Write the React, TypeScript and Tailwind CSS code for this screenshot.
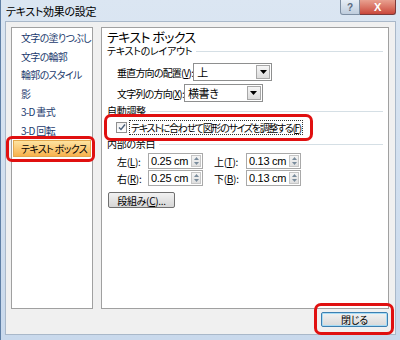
import React from 'react'

const menuItems = ['文字の塗りつぶし', '文字の輪郭', '輪郭のスタイル', '影', '3-D 書式', '3-D 回転', 'テキスト ボックス']

function Combo({ value, width }: { value: string; width: string }) {
  return (
    <div className={`flex h-[18px] items-stretch border border-[#8e8f8f] bg-white ${width}`}>
      <div className="flex flex-1 items-center whitespace-nowrap pl-[3px] text-[11px]">{value}</div>
      <div className="m-[1px] flex w-[14px] items-center justify-center border border-[#a7a7a7] bg-gradient-to-b from-[#f6f6f6] to-[#dcdcdc]">
        <svg width="7" height="4" viewBox="0 0 7 4">
          <path d="M0 0h7L3.5 4z" fill="#000" />
        </svg>
      </div>
    </div>
  )
}

function Spin({ value }: { value: string }) {
  return (
    <div className="flex h-[16px] w-[55px] shrink-0 items-stretch border border-[#a9a9a9] bg-white">
      <div className="flex flex-1 items-center whitespace-nowrap pl-[2px] font-['Liberation_Sans'] text-[11px] tracking-[-0.3px]">
        {value}
      </div>
      <div className="my-[1px] mr-[1px] flex w-[10px] flex-col border border-[#c6c6c6] bg-gradient-to-b from-[#f4f4f4] to-[#e0e0e0]">
        <div className="flex flex-1 items-center justify-center">
          <svg width="5" height="3" viewBox="0 0 5 3">
            <path d="M0 3h5L2.5 0z" fill="#7a8c9c" />
          </svg>
        </div>
        <div className="flex flex-1 items-center justify-center">
          <svg width="5" height="3" viewBox="0 0 5 3">
            <path d="M0 0h5L2.5 3z" fill="#7a8c9c" />
          </svg>
        </div>
      </div>
    </div>
  )
}

function Section({ title }: { title: string }) {
  return (
    <div className="flex items-center gap-[4px] pr-[5px]">
      <span className="whitespace-nowrap text-[10px] leading-[12px]">{title}</span>
      <div className="h-0 flex-1 border-t border-[#d5dfe5]" />
    </div>
  )
}

export default function App() {
  return (
    <div className="relative flex h-[340px] w-[400px] flex-col overflow-hidden border-l-[1px] border-[#5f7fa5] bg-gradient-to-b from-[#dbe6f2] to-[#c9d9ec] font-['Noto_Sans_CJK_JP',sans-serif] text-black [font-feature-settings:'palt'] tracking-[-0.3px]">
      {/* Title bar */}
      <div className="flex h-[21px] items-start">
        <div className="whitespace-nowrap pl-[5px] pt-[3px] text-[11px] leading-[16px]">テキスト効果の設定</div>
        <div className="ml-auto mr-[4px] flex">
          <div className="flex h-[15px] w-[20px] items-center justify-center rounded-bl-[3px] border border-t-0 border-[#7d8ea2] bg-gradient-to-b from-[#e6edf5] to-[#bfcddd] font-['Liberation_Sans'] text-[10px] font-bold text-[#5a6a7e]">
            ?
          </div>
          <div className="flex h-[15px] w-[36px] items-center justify-center rounded-br-[3px] border border-l-0 border-t-0 border-[#7a3a3a] bg-gradient-to-b from-[#e8a090] to-[#c9463b] font-['Liberation_Sans'] text-[11px] font-bold text-white">
            X
          </div>
        </div>
      </div>

      {/* Client area */}
      <div className="mx-[4px] mb-[5px] flex flex-1 flex-col border border-[#a9b8c9] bg-[#f0f0f0]">
        <div className="flex flex-1 gap-[8px] pl-[5px] pr-[6px] pt-[5px]">
          {/* Left list */}
          <div className="flex w-[82px] shrink-0 flex-col border border-[#a0a0a0] bg-white pt-[1px]">
            {menuItems.map((item, i) =>
              i === menuItems.length - 1 ? (
                <div
                  key={item}
                  className="mx-[1px] flex h-[17px] items-center whitespace-nowrap border border-[#e3a84e] bg-gradient-to-b from-[#fde3a0] to-[#f7b24c] pl-[7px] text-[10px] leading-none tracking-[-0.7px]"
                >
                  {item}
                </div>
              ) : (
                <div
                  key={item}
                  className="flex h-[18.5px] items-center whitespace-nowrap pl-[9px] text-[10px] leading-none tracking-[-0.7px] text-[#1c3b6e]"
                >
                  {item}
                </div>
              ),
            )}
          </div>

          {/* Right panel */}
          <div className="flex flex-1 flex-col border border-[#a0a0a0] bg-white pl-[5px] pt-[2px]">
            <div className="whitespace-nowrap text-[13px] leading-[14px] tracking-[-0.6px]">テキスト ボックス</div>
            <div className="mt-[1px]">
              <Section title="テキストのレイアウト" />
            </div>
            <div className="mt-[6px] flex flex-col gap-[3px] pl-[10px]">
              <div className="flex items-center">
                <span className="whitespace-nowrap text-[10px] tracking-[-0.8px]">
                  垂直方向の配置(<u>V</u>):
                </span>
                <Combo value="上" width="w-[79px]" />
              </div>
              <div className="flex items-center">
                <span className="whitespace-nowrap text-[10px] tracking-[-0.8px]">
                  文字列の方向(<u>X</u>):
                </span>
                <Combo value="横書き" width="w-[79px]" />
              </div>
            </div>
            <div className="mt-[3px]">
              <Section title="自動調整" />
            </div>
            <div className="mt-[3px] flex items-center pl-[9px]">
              <div className="flex h-[11px] w-[11px] items-center justify-center border border-[#8f8f8f] bg-gradient-to-b from-[#f0f0f0] to-[#ffffff]">
                <svg width="8" height="7" viewBox="0 0 8 7">
                  <path d="M1 3.5l2 2 4-5" stroke="#4a5f7a" strokeWidth="1.4" fill="none" />
                </svg>
              </div>
              <span className="ml-[2px] whitespace-nowrap border border-dotted border-[#333] px-[1px] text-[10px] leading-[13px] tracking-[-1.3px]">
                テキストに合わせて図形のサイズを調整する(<u>F</u>)
              </span>
            </div>
            <div className="mt-[3px]">
              <Section title="内部の余白" />
            </div>
            <div className="mt-[3px] flex flex-col gap-[1px] pl-[10px] text-[10px]">
              <div className="flex items-center">
                <span className="w-[31px] whitespace-nowrap">
                  左(<u>L</u>):
                </span>
                <Spin value="0.25 cm" />
                <span className="ml-[11px] w-[32px] whitespace-nowrap">
                  上(<u>T</u>):
                </span>
                <Spin value="0.13 cm" />
              </div>
              <div className="flex items-center">
                <span className="w-[31px] whitespace-nowrap">
                  右(<u>R</u>):
                </span>
                <Spin value="0.25 cm" />
                <span className="ml-[11px] w-[32px] whitespace-nowrap">
                  下(<u>B</u>):
                </span>
                <Spin value="0.13 cm" />
              </div>
            </div>
            <div className="mt-[6px] pl-[1px]">
              <div className="flex h-[16px] w-[67px] items-center justify-center whitespace-nowrap rounded-[2px] border border-[#707070] bg-gradient-to-b from-[#f2f2f2] to-[#d6d6d6] text-[10px]">
                段組み(<u>C</u>)...
              </div>
            </div>
          </div>
        </div>

        {/* Bottom button row */}
        <div className="flex justify-end pb-[7px] pr-[7px] pt-[3px]">
          <div className="flex h-[15px] w-[67px] items-center justify-center rounded-[2px] border border-[#3c7fb1] bg-gradient-to-b from-[#f2f2f2] to-[#d9d9d9] text-[10px] shadow-[inset_0_0_0_1px_#a8dcf5]">
            閉じる
          </div>
        </div>
      </div>

      {/* Red annotation marks */}
      <div className="pointer-events-none absolute left-[5px] top-[136px] h-[26px] w-[89px] rounded-[6px] border-[3px] border-[#e01010]" />
      <div className="pointer-events-none absolute left-[103px] top-[114px] h-[27px] w-[209px] rounded-[7px] border-[3px] border-[#e01010]" />
      <div className="pointer-events-none absolute left-[313px] top-[303px] h-[32px] w-[80px] rounded-[7px] border-[3px] border-[#e01010]" />
    </div>
  )
}
